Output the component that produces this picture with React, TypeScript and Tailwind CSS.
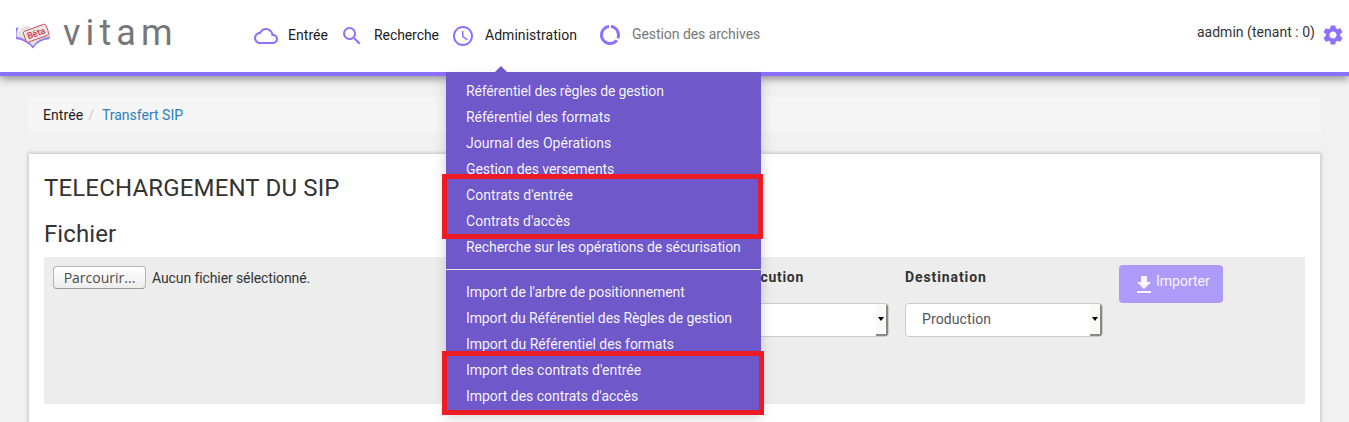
import {
  MdCloudQueue,
  MdSearch,
  MdAccessTime,
  MdDataUsage,
  MdSettings,
  MdFileDownload,
} from "react-icons/md";

type Item = { label: string; tracking: string };

const consultItems: Item[] = [
  { label: "Référentiel des règles de gestion", tracking: "tracking-[-0.15px]" },
  { label: "Référentiel des formats", tracking: "tracking-[-0.05px]" },
  { label: "Journal des Opérations", tracking: "tracking-[0.04px]" },
  { label: "Gestion des versements", tracking: "tracking-[-0.09px]" },
  { label: "Contrats d'entrée", tracking: "tracking-[0.06px]" },
  { label: "Contrats d'accès", tracking: "tracking-[0.03px]" },
  { label: "Recherche sur les opérations de sécurisation", tracking: "tracking-[-0.09px]" },
];

const importItems: Item[] = [
  { label: "Import de l'arbre de positionnement", tracking: "tracking-[-0.07px]" },
  { label: "Import du Référentiel des Règles de gestion", tracking: "tracking-[-0.115px]" },
  { label: "Import du Référentiel des formats", tracking: "tracking-[-0.05px]" },
  { label: "Import des contrats d'entrée", tracking: "tracking-normal" },
  { label: "Import des contrats d'accès", tracking: "tracking-[-0.03px]" },
];

function Logo() {
  return (
    <svg width="36" height="28" viewBox="0 0 36 28" className="shrink-0">
      <path d="M1 6 L3 5.500 L17 18 L33 10 L35 14.500 L34.500 17 Q23 18 18 26.500 Q11 18 1 17 Z" fill="#8c70ff" />
      <path d="M1.500 14.500 Q1 6 6 3.500 Q12 1.500 17 7 Q22 1.500 29 3 L34.800 14.500 Q23 16 18 24 Q11 16.500 1.500 14.500 Z" fill="#e2e2e3" />
      <path d="M1.500 15 Q11 16.500 18 24 Q23 16.500 34.500 15" fill="none" stroke="#b9b6bd" strokeWidth="0.900" />
      <path d="M4 10 Q4 4 11 4" fill="none" stroke="#f7f7f7" strokeWidth="2" />
      <g transform="rotate(-20 21 11)">
        <rect x="9" y="5.500" width="24" height="11.500" rx="1.800" fill="#eae5e7" stroke="#d64c56" strokeWidth="0.900" />
        <text x="21" y="14.400" textAnchor="middle" fontFamily="Roboto, sans-serif" fontSize="9" fontWeight="500" fill="#cf3541">
          Bêta
        </text>
      </g>
    </svg>
  );
}

function MenuList({ items }: { items: Item[] }) {
  return (
    <ul>
      {items.map(({ label, tracking }) => (
        <li key={label} className={`h-[26px] pl-5 leading-[26px] whitespace-nowrap ${tracking}`}>
          {label}
        </li>
      ))}
    </ul>
  );
}

function AdminMenu() {
  return (
    <div className="absolute top-[72px] left-[446px] z-10 h-[340px] w-[315px] bg-[#6f58c9] pt-1.5 text-white/95 shadow-[0_6px_12px_rgba(0,0,0,0.175)]">
      <svg width="12" height="6" viewBox="0 0 12 6" className="absolute -top-1.5 left-[49px]">
        <path d="M0 6 L6 0 L12 6 Z" fill="#6f58c9" />
      </svg>
      <MenuList items={consultItems} />
      <div className="mt-[9px] mb-[9px] h-px bg-[#e5e5e5]" />
      <MenuList items={importItems} />
    </div>
  );
}

function SelectBox({ value }: { value: string }) {
  return (
    <div className="flex h-[34px] w-[198px] items-stretch overflow-hidden rounded border border-[#ccc] bg-white text-[#555]">
      <span className="flex-1 pl-4 leading-[31px] tracking-[0.1px]">{value}</span>
      <span className="flex w-3 items-center justify-center border-r-2 border-b-2 border-[#888] bg-[#f9f9f7]">
        <svg width="6" height="4" viewBox="0 0 6 4">
          <path d="M0 0 H6 L3 4 Z" fill="#000" />
        </svg>
      </span>
    </div>
  );
}

export default function App() {
  return (
    <div className="relative h-[422px] w-[1349px] overflow-hidden bg-[#f1f1f1] font-[Roboto,sans-serif] text-sm leading-5 text-[#333]">
      <header className="relative flex h-[76px] items-start border-b-4 border-[#8c70ff] bg-white shadow-[0_3px_8px_rgba(0,0,0,0.4)]">
        <div className="flex pt-[22px] pl-[15px]">
          <Logo />
        </div>
        <div className="w-[203px] pt-[13px] pl-3 text-4xl leading-10 tracking-[5.1px] text-[#777]">vitam</div>
        <nav className="flex flex-1 items-center pt-6 text-[#222]">
          <MdCloudQueue size={24} color="#8c70ff" />
          <span className="-mt-0.5 ml-2.5 w-[52px] tracking-[0.05px] whitespace-nowrap">Entrée</span>
          <MdSearch size={24} color="#8c70ff" />
          <span className="-mt-0.5 ml-2.5 w-[77px] tracking-[-0.08px] whitespace-nowrap">Recherche</span>
          <MdAccessTime size={24} color="#8c70ff" />
          <span className="-mt-0.5 ml-2.5 w-[113px] tracking-[0.04px] whitespace-nowrap">Administration</span>
          <MdDataUsage size={24} color="#8c70ff" className="-mt-0.5" />
          <span className="-mt-[4px] ml-2.5 tracking-[-0.06px] whitespace-nowrap text-[#777]">Gestion des archives</span>
        </nav>
        <div className="flex items-center gap-1.5 pt-[23px] pr-1">
          <span className="-mt-1.5 tracking-[0.03px]">aadmin (tenant : 0)</span>
          <MdSettings size={24} color="#8c70ff" />
        </div>
      </header>

      <main className="pt-[21px] pr-7 pl-7">
        <div className="flex h-9 items-center rounded bg-[#f5f5f5] pl-[15px]">
          <span className="tracking-[0.07px] text-[#222]">Entrée</span>
          <span className="pl-[5px] text-[#ccc]">/</span>
          <span className="pl-2 text-[#2a80c2]">Transfert SIP</span>
        </div>
        <section className="mx-px mt-[21px] h-[300px] bg-white px-[15px] pt-[21px] shadow-[0_0_4px_1px_rgba(0,0,0,0.2)]">
          <h1 className="text-2xl leading-[26px] tracking-[0.16px]">TELECHARGEMENT DU SIP</h1>
          <h2 className="mt-5 text-2xl leading-[26px] tracking-[0.1px]">Fichier</h2>
          <div className="mt-2.5 flex h-[147px] bg-[#ededed]">
            <div className="flex w-[647px] items-start pt-[9px] pl-[9px]">
              <button className="h-[23px] w-[93px] rounded-[4px] border border-[#b5b5b5] border-b-[#999] bg-linear-to-b from-white to-[#ededed] font-['Open_Sans',sans-serif] text-sm leading-5 text-[#4c4c4c]">
                Parcourir...
              </button>
              <span className="ml-1.5 leading-6 tracking-[-0.1px]">Aucun fichier sélectionné.</span>
            </div>
            <div className="w-[214px] pt-2.5">
              <div className="mb-4 pr-[101px] text-right font-bold tracking-[0.7px] whitespace-nowrap">
                Exécution
              </div>
              <SelectBox value="" />
            </div>
            <div className="w-[214px] pt-2.5">
              <div className="mb-4 font-bold tracking-[0.9px]">Destination</div>
              <SelectBox value="Production" />
            </div>
            <button className="mt-2 flex h-[38px] w-[104px] items-start rounded bg-[#ad9bf9] pl-[13px] text-white/90">
              <MdFileDownload size={24} className="mt-2" />
              <span className="mt-1.5">Importer</span>
            </button>
          </div>
        </section>
      </main>

      <AdminMenu />
      <div className="absolute top-[174px] left-[442px] z-20 h-[65px] w-[321px] border-5 border-[#ed1c24]" />
      <div className="absolute top-[351px] left-[442px] z-20 h-[64px] w-[322px] border-5 border-[#ed1c24]" />
    </div>
  );
}
